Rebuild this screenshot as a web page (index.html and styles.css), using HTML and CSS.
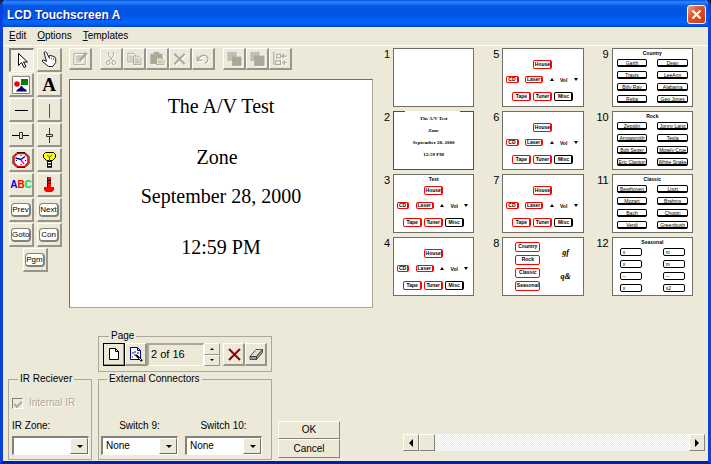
FILE: index.html
```html
<!DOCTYPE html>
<html lang="en">
<head>
<meta charset="utf-8">
<title>LCD Touchscreen A</title>
<link rel="stylesheet" href="styles.css">
</head>
<body>
<div class="window">
  <header class="titlebar">
    <h1>LCD Touchscreen A</h1>
    <button class="close" aria-label="Close"><svg width="11" height="11" viewBox="0 0 11 11"><path d="M1.5 1.5l8 8M9.5 1.5l-8 8" stroke="#fff" stroke-width="2.2"/></svg></button>
  </header>
  <nav class="menubar">
    <button><u>E</u>dit</button><button><u>O</u>ptions</button><button><u>T</u>emplates</button>
  </nav>

  <main class="main">
    <div class="tools">
      <button class="tool pressed" aria-label="Select"><svg width="20" height="20" viewBox="0 0 20 20"><path d="M6.500 2.500v12l3-3 2.500 5 2-1-2.500-4.500h4z" fill="#fff" stroke="#000"/></svg></button>
      <button class="tool" aria-label="Hand"><svg width="20" height="20" viewBox="0 0 20 20"><path d="M5 2.500q1.500-1.500 2.500 0l2.500 5V6q1-1.500 2 0 1-1 2 .5 1.200-.8 1.500.8 1.200 0 1.200 1.200v4l-3 4H9.500l-6-5q-.5-2 1-1.500L7.500 11.500z" fill="#fff" stroke="#000" stroke-width=".9"/><path d="M10.500 7v2M12.500 7.500v2M14.500 8v2" stroke="#444" stroke-width=".7"/></svg></button>
      <button class="tool" aria-label="Picture"><svg width="18" height="18" viewBox="0 0 18 18"><path fill="#fff" stroke="#848278" d="M.5.5h17v17H.5z"/><circle cx="5" cy="8" r="2.800" fill="#f00"/><path fill="#008000" d="M9 3h7v6H9z"/><path fill="#000080" d="M4 15.500q1.500-3 3-3l2.500-3 2.500 3q2 0 3 3z"/></svg></button>
      <button class="tool letter">A</button>
      <button class="tool" aria-label="Horizontal line"><svg width="20" height="20" viewBox="0 0 20 20"><path stroke="#000" d="M4 10.500h13"/></svg></button>
      <button class="tool" aria-label="Vertical line"><svg width="20" height="20" viewBox="0 0 20 20"><path stroke="#555" d="M10.500 4v14"/></svg></button>
      <button class="tool" aria-label="Horizontal slider"><svg width="20" height="20" viewBox="0 0 20 20"><path stroke="#000" d="M1 10.500h17"/><path fill="#ddd" stroke="#333" d="M8.500 7.500h3v6h-3z"/></svg></button>
      <button class="tool" aria-label="Vertical slider"><svg width="20" height="20" viewBox="0 0 20 20"><path stroke="#333" d="M10.500 3v15"/><path fill="#ddd" stroke="#333" d="M7.500 9.500h6v2h-6z"/></svg></button>
      <button class="tool" aria-label="Clock"><svg width="20" height="20" viewBox="0 0 20 20"><path d="M6 2.500h8l4 4v7l-4 4H6l-4-4v-7z" fill="#fff" stroke="#000"/><path d="M6.500 3.500h7l3.500 3.500v6l-3.500 3.500h-7L3 13V7z" fill="none" stroke="#f00000" stroke-width="1.500"/><path d="M10 5v1M10 14v1M5 10.500h1M14 10.500h1" stroke="#000"/><path d="M4.500 8l5.500 1.500 4-3" fill="none" stroke="#000080" stroke-width="1.300"/><path d="M10 10l3 4" stroke="#f0f" stroke-width="1.500"/></svg></button>
      <button class="tool" aria-label="Light"><svg width="20" height="20" viewBox="0 0 20 20"><path d="M6.500 2.500h8l2 2v3l-3 3h-6l-3-3v-3z" fill="#ff0" stroke="#000"/><path d="M8 5l2.500 2L13 5M10.500 7v4" fill="none" stroke="#554"/><path fill="#fff" stroke="#000" d="M8.500 11.500h4v5h-4z"/><path stroke="#000" stroke-width="1.500" d="M8 14h5M8 17h5"/></svg></button>
      <button class="tool abc" aria-label="ABC"><span class="blue">A</span><span class="red">B</span><span class="green">C</span></button>
      <button class="tool" aria-label="Level"><svg width="20" height="20" viewBox="0 0 20 20"><path fill="#f00" d="M8 2h4v10h3v3l-2 2H7l-2-2v-3h3z"/><path stroke="#000" d="M8 5.500h4M8 8.500h4"/><path stroke="#600" d="M8.500 2v10"/></svg></button>
      <button class="tool"><span class="keycap">Prev</span></button>
      <button class="tool"><span class="keycap">Next</span></button>
      <button class="tool"><span class="keycap">Goto</span></button>
      <button class="tool"><span class="keycap">Con</span></button>
      <button class="tool wide"><span class="keycap">Pgm</span></button>
    </div>

    <div class="editor">
      <div class="toolbar">
        <div class="bar-group">
          <button disabled aria-label="Edit item"><svg viewBox="0 0 18 18"><path d="M2.500 3.500h12v12h-12zM5 6.500h6M5 8.500h5M5 10.500h4M5 12.500h5"/><path d="M9 11l7-8" stroke-width="3"/></svg></button>
        </div>
        <div class="bar-group">
          <button disabled aria-label="Cut"><svg viewBox="0 0 18 18"><path d="M6.500 2v4l5 6M11.500 2v4l-5 6"/><circle cx="6" cy="13.500" r="2"/><circle cx="12" cy="13.500" r="2"/></svg></button>
          <button disabled aria-label="Copy"><svg viewBox="0 0 18 18"><path d="M2.500 3.500h6l2 2v7h-8zM4 6.500h3M4 8.500h4M4 10.500h4"/><path fill="#ece9d8" d="M8.500 6.500h5l3 3v6h-8zM10 9.500h3M10 11.500h5M10 13.500h5"/></svg></button>
          <button disabled aria-label="Paste"><svg viewBox="0 0 18 18"><path fill="#aca899" d="M2.500 4.500h12v10h-12z"/><path fill="#aca899" d="M6 2.500h5v3H6z"/><path fill="#ece9d8" d="M8.500 8.500h5l3 3v4h-8zM10 11.500h4M10 13.500h5"/></svg></button>
          <button disabled aria-label="Delete"><svg viewBox="0 0 18 18"><path stroke-width="2.200" d="M3 4l11 11M14 4L3 15"/></svg></button>
          <button disabled aria-label="Undo"><svg viewBox="0 0 18 18"><path stroke-width="1.300" d="M3 6v5h5M3.500 10.500C6 5 12 4 14 8q1 4-3 6"/></svg></button>
        </div>
        <div class="bar-group">
          <button disabled aria-label="Bring to front"><svg viewBox="0 0 18 18"><path fill="#c2beb0" stroke-dasharray="1 1" d="M2.500 2.500h9v9h-9z"/><path fill="#aca899" d="M7.500 7.500h9v9h-9z"/></svg></button>
          <button disabled aria-label="Send to back"><svg viewBox="0 0 18 18"><path fill="#c2beb0" stroke-dasharray="1 1" d="M2.500 2.500h9v9h-9z"/><path fill="#aca899" d="M6.500 6.500h10v10h-10z"/></svg></button>
          <button disabled aria-label="Align"><svg viewBox="0 0 18 18"><path stroke-width="1.200" d="M2.500 2v14M5.500 4.500h4v4h-4zM4.500 11.500h5v4h-5zM16 6.500h-5l2-2M11 6.500l2 2M11 13.500h5M13.500 11v5"/></svg></button>
        </div>
      </div>
      <section class="canvas" aria-label="Page preview">
        <p>The A/V Test</p>
        <p class="zone">Zone</p>
        <p>September 28, 2000</p>
        <p>12:59 PM</p>
      </section>
    </div>

    <ol class="pages">
      <li><span class="num">1</span><div class="page"></div></li>
      <li><span class="num">2</span><div class="page current"><p>The A/V Test</p><p>Zone</p><p>September 28, 2000</p><p>12:59 PM</p></div></li>
      <li><span class="num">3</span><div class="page remote"><p class="heading">Test</p><div class="row"><b>House</b></div><div class="row wide-row"><b>CD</b><b>Laser</b><i class="up"></i><span>Vol</span><i class="down"></i></div><div class="row sources"><b>Tape</b><b>Tuner</b><b class="dark">Misc</b></div></div></li>
      <li><span class="num">4</span><div class="page remote"><p class="heading"></p><div class="row"><b>House</b></div><div class="row wide-row"><b>CD</b><b>Laser</b><i class="up"></i><span>Vol</span><i class="down"></i></div><div class="row sources"><b>Tape</b><b>Tuner</b><b class="dark">Misc</b></div></div></li>
      <li><span class="num">5</span><div class="page remote"><p class="heading"></p><div class="row"><b>House</b></div><div class="row wide-row"><b>CD</b><b>Laser</b><i class="up"></i><span>Vol</span><i class="down"></i></div><div class="row sources"><b>Tape</b><b>Tuner</b><b class="dark">Misc</b></div></div></li>
      <li><span class="num">6</span><div class="page remote"><p class="heading"></p><div class="row"><b>House</b></div><div class="row wide-row"><b>CD</b><b>Laser</b><i class="up"></i><span>Vol</span><i class="down"></i></div><div class="row sources"><b>Tape</b><b>Tuner</b><b class="dark">Misc</b></div></div></li>
      <li><span class="num">7</span><div class="page remote"><p class="heading"></p><div class="row"><b>House</b></div><div class="row wide-row"><b>CD</b><b>Laser</b><i class="up"></i><span>Vol</span><i class="down"></i></div><div class="row sources"><b>Tape</b><b>Tuner</b><b class="dark">Misc</b></div></div></li>
      <li><span class="num">8</span><div class="page genres"><div class="genre-list"><b>Country</b><b>Rock</b><b>Classic</b><b>Seasonal</b></div><div class="marks"><em>gf</em><em>q&amp;</em></div></div></li>
      <li><span class="num">9</span><div class="page list"><p class="heading">Country</p><div class="keys"><b>Garth</b><b>Dean</b><b>Travis</b><b>LeeAnn</b><b>Billy Ray</b><b>Alabama</b><b>Reba</b><b>Geo Jones</b></div></div></li>
      <li><span class="num">10</span><div class="page list"><p class="heading">Rock</p><div class="keys"><b>Zepplin</b><b>Jonny Lang</b><b>Arrowsmith</b><b>Tesla</b><b>Bob Seger</b><b>Motely Crue</b><b>Eric Clapton</b><b>White Snake</b></div></div></li>
      <li><span class="num">11</span><div class="page list"><p class="heading">Classic</p><div class="keys"><b>Beethoven</b><b>Liszt</b><b>Mozart</b><b>Brahms</b><b>Bach</b><b>Chopin</b><b>Verdi</b><b>Greenbush</b></div></div></li>
      <li><span class="num">12</span><div class="page list short"><p class="heading">Seasonal</p><div class="keys"><b>x</b><b>m</b><b>x</b><b>m</b><b>--</b><b>--</b><b>x</b><b>x2</b></div></div></li>
    </ol>
  </main>

  <footer class="dock">
    <fieldset class="page-box">
      <legend>Page</legend>
      <div class="pager">
        <button class="tool default" aria-label="New page"><svg width="16" height="16" viewBox="0 0 16 16"><path fill="#fff" stroke="#000" d="M3.500 2.500h6l3 3v8h-9zM9.500 2.500v3h3"/></svg></button>
        <button class="tool" aria-label="Page wizard"><svg width="16" height="16" viewBox="0 0 16 16"><path fill="#fff" stroke="#000080" d="M2.500 1.500h7l3 3v9h-10zM9.500 1.500v3h3"/><path stroke="#000080" d="M4 7h2M7 5v2M6 9h2M4 11h1M9 7h2"/><path stroke="#000" stroke-width="2" d="M8 9l6 6"/><path stroke="#ff0" d="M11 12l2 2"/></svg></button>
        <output class="count">2 of 16</output>
        <span class="spin"><button aria-label="Next page"><i class="up"></i></button><button aria-label="Previous page"><i class="down"></i></button></span>
        <button class="tool" aria-label="Delete page"><svg width="16" height="16" viewBox="0 0 16 16"><path d="M3 3l11 11M14 3L3 14" stroke="#900000" stroke-width="2"/></svg></button>
        <button class="tool" aria-label="Clear page"><svg width="16" height="16" viewBox="0 0 16 16"><path fill="#ddd" stroke="#333" stroke-width=".8" d="M2 10.500l6-7h6.500l-6 7z"/><path fill="#999" stroke="#333" stroke-width=".8" d="M2 10.500h6.500v3H2z"/><path fill="#aa4" stroke="#333" stroke-width=".8" d="M8.500 10.500l6-7v3l-6 7z"/></svg></button>
      </div>
    </fieldset>

    <fieldset class="ir-box">
      <legend>IR Reciever</legend>
      <label class="check"><input type="checkbox" checked disabled>Internal IR</label>
      <div class="field"><label for="zone">IR Zone:</label><span class="combo"><select id="zone"><option></option></select></span></div>
    </fieldset>

    <fieldset class="ext-box">
      <legend>External Connectors</legend>
      <div class="field centered"><label for="sw9">Switch 9:</label><span class="combo"><select id="sw9"><option>None</option></select></span></div>
      <div class="field centered"><label for="sw10">Switch 10:</label><span class="combo"><select id="sw10"><option>None</option></select></span></div>
    </fieldset>

    <div class="actions"><button>OK</button><button>Cancel</button></div>

    <div class="scroll">
      <button aria-label="Scroll left"><i class="left"></i></button>
      <span class="track"><span class="thumb"></span></span>
      <button aria-label="Scroll right"><i class="right"></i></button>
    </div>
  </footer>
</div>
</body>
</html>
```
FILE: styles.css
```css
* { box-sizing: border-box; }

body {
  margin: 0;
  background: #10204a;
  color: #000;
  font: 10px/12px "Liberation Sans", sans-serif;
}

p, h1, ol, fieldset { margin: 0; padding: 0; }

button, select {
  margin: 0;
  padding: 0;
  border: 0;
  border-radius: 0;
  background: #ece9d8;
  color: inherit;
  font: inherit;
}

svg { display: block; flex: none; }

.window {
  display: flex;
  flex-direction: column;
  min-height: 100vh;
  border: solid #0842d8;
  border-width: 0 3px 3px;
  border-bottom-color: #0020a8;
  border-radius: 6px 6px 0 0;
  background: #ece9d8;
  overflow: hidden;
}

.titlebar {
  display: flex;
  align-items: center;
  justify-content: space-between;
  height: 27px;
  margin: 0 -3px;
  padding: 2px 5px 0 7px;
  background: linear-gradient(#0a50d8, #2a86ff 2px, #0458e4 6px, #0054e3 14px, #0066ff 22px, #0058ee 25px, #0040c0);
}

.titlebar h1 {
  color: #fff;
  font-size: 12px;
  line-height: 16px;
  text-shadow: 1px 1px #0a1883;
}

.close {
  display: grid;
  place-items: center;
  width: 19px;
  height: 19px;
  border: 1px solid #fff;
  border-radius: 3px;
  background: linear-gradient(135deg, #f0a088, #e0532c 40%, #c83a14);
}

.menubar {
  display: flex;
  gap: 11px;
  height: 18px;
  padding: 0 6px;
}

/* Main area */
.main {
  display: grid;
  grid-template-columns: 53px minmax(0, 311fr) minmax(0, 320fr);
  align-items: start;
  padding: 2px 15px 0 6px;
  border-top: 1px solid #fff;
}

.tools {
  display: grid;
  grid-template-columns: 1fr 1fr;
  grid-auto-rows: 24px;
  gap: 1px 3px;
}

.tool {
  display: flex;
  align-items: center;
  justify-content: center;
  overflow: hidden;
  border: solid;
  border-width: 1px 2px 2px 1px;
  border-color: #fff #98958a #98958a #fff;
}

.tool.pressed {
  border-width: 2px 1px 1px 2px;
  border-color: #848278 #fff #fff #848278;
  background: #f2f0e6;
}

.tool.wide {
  grid-column: 1 / 3;
  justify-self: center;
  width: 25px;
}

.letter { font: bold 19px/20px "Liberation Serif", serif; }
.abc { font-weight: bold; }
.blue { color: #00f; }
.red { color: #f00; }
.green { color: #00e030; }

.keycap {
  width: 20px;
  height: 14px;
  border: 1px solid #848278;
  border-right-width: 2px;
  border-bottom-width: 2px;
  border-radius: 4px;
  background: #fff;
  font-size: 8px;
  line-height: 11px;
}

.editor { padding: 0 0 0 7px; min-width: 0; }

.toolbar { display: flex; gap: 8px; }
.bar-group { display: flex; }

.toolbar button {
  width: 23px;
  height: 22px;
  padding: 1px;
  border: solid;
  border-width: 1px 2px 2px 1px;
  border-color: #fff #98958a #98958a #fff;
}

.toolbar svg {
  width: 18px;
  height: 17px;
  fill: none;
  stroke: #aca899;
  filter: drop-shadow(1px 1px 0 #fff);
}

.canvas {
  height: 229px;
  margin-top: 9px;
  padding-top: 14px;
  border: 1px solid #716f64;
  border-right-color: #aca899;
  border-bottom-color: #aca899;
  background: #fff;
  font: 20px/24px "Liberation Serif", serif;
  text-align: center;
}

.canvas p { margin-bottom: 27px; }
.canvas .zone { margin-bottom: 15px; padding-right: 8px; }

/* Page thumbnails */
.pages {
  display: grid;
  grid-template-rows: repeat(4, 59px);
  grid-auto-columns: minmax(0, 1fr);
  grid-auto-flow: column;
  gap: 4px 10px;
  padding-left: 2px;
  list-style: none;
}

.pages li { display: flex; }

.num {
  width: 18px;
  padding-right: 3px;
  font-size: 11px;
  text-align: right;
  white-space: nowrap;
}

.page {
  flex: 1;
  min-width: 0;
  border: 1px solid #716f64;
  background: #fff;
  font-size: 5px;
  line-height: 6px;
  text-align: center;
  white-space: nowrap;
}

.page b {
  display: block;
  border: 1px solid #f00;
  border-right-width: 2px;
  border-radius: 2px;
  font-weight: normal;
}

.page b.dark { border-color: #000; }
.heading { height: 7px; padding-top: 1px; font-weight: bold; }

/* The selected page is framed in red, open in the middle of its top edge */
.page.current {
  display: flex;
  flex-direction: column;
  gap: 5px;
  padding-top: 4px;
  border: solid #f00;
  border-width: 0 1px 1px;
  background-color: #fff;
  background-image: linear-gradient(90deg, #f00 14%, #fff 14%, #fff 84%, #f00 84%);
  background-position: 0 0;
  background-size: 100% 1px;
  background-repeat: no-repeat;
  font: bold 5px/7px "Liberation Serif", serif;
}

.remote .row { display: flex; justify-content: center; }
.remote .row > b { width: 19px; line-height: 7px; }
.remote .row:nth-child(2) { margin-top: 4px; }
.remote .wide-row {
  align-items: center;
  justify-content: space-between;
  margin-top: 7px;
  padding: 0 5px 0 3px;
}
.remote .wide-row > b { width: auto; padding: 0 1px; line-height: 5px; }
.remote .sources { gap: 2px; margin-top: 9px; }
.remote b, .remote span, .genres b { font-weight: bold; }

i.up, i.down { border: solid transparent; border-width: 0 2px; }
i.up { border-bottom: 3px solid #000; }
i.down { border-top: 3px solid #000; }

.genres { display: flex; justify-content: space-between; padding: 4px 12px; }
.genre-list { display: grid; gap: 3px; width: 25px; }
.genre-list b { border-right-width: 1px; line-height: 7px; }
.marks {
  display: flex;
  flex-direction: column;
  gap: 15px;
  padding-top: 6px;
  font: italic bold 8px/9px "Liberation Serif", serif;
}

.keys {
  display: grid;
  grid-template-columns: 1fr 1fr;
  gap: 4px 10px;
  padding: 3px 4px;
}

.page .keys b {
  height: 8px;
  border-color: #000;
  border-width: 1px 1px 2px;
}

.short .keys { gap: 4px 21px; padding: 3px 7px; }
.page.short .keys b { padding-left: 2px; text-align: left; border-width: 1px; }

/* Bottom controls */
.dock {
  display: grid;
  grid-template-columns: 84px 174px 62px minmax(0, 1fr);
  grid-template-rows: 42px 87px;
  gap: 1px 6px;
  margin-top: auto;
  padding: 0 3px 1px 5px;
}

fieldset {
  min-width: 0;
  border: 1px solid #aca899;
}

legend { margin-left: 6px; padding: 0 2px; }

.page-box { grid-column: 2; padding: 1px 4px; }
.ir-box { grid-column: 1; padding: 0 3px; }
.ext-box { display: flex; gap: 7px; padding: 0 2px; }

.pager { display: flex; height: 23px; }
.pager .tool { width: 22px; }
.pager .default { outline: 1px solid #000; outline-offset: -1px; }

.count {
  flex: 1;
  padding: 3px 2px;
  border: solid;
  border-width: 2px 1px 1px 2px;
  border-color: #aca899 #fff #fff #aca899;
  font-size: 11px;
}

.spin { display: grid; width: 16px; margin-right: 3px; }
.spin button {
  display: grid;
  place-items: center;
  border: 1px solid;
  border-color: #fff #98958a #98958a #fff;
}
.spin i.up { border-bottom-width: 2px; }
.spin i.down { border-top-width: 2px; }

.check {
  display: flex;
  align-items: center;
  gap: 6px;
  height: 12px;
  margin: 12px 0 11px;
  color: #aca899;
  text-shadow: 1px 1px #fff;
}

.check input {
  appearance: none;
  display: grid;
  place-items: center;
  width: 11px;
  height: 11px;
  margin: 0;
  border: 1px solid;
  border-color: #848278 #fff #fff #848278;
}

.check input::before {
  content: "";
  width: 6px;
  height: 3px;
  border: solid #aca899;
  border-width: 0 0 2px 2px;
  transform: rotate(-45deg);
}

.field { flex: none; width: 77px; }
.field label { display: block; margin-bottom: 4px; }
.ext-box .field { padding-top: 35px; }
.centered label { text-align: center; }

.combo { position: relative; display: block; }

.combo select {
  appearance: none;
  display: block;
  width: 100%;
  height: 19px;
  padding-left: 3px;
  border: solid;
  border-width: 2px 1px 1px 2px;
  border-color: #848278 #fff #fff #848278;
  background: #fff;
}

.combo::before {
  content: "";
  position: absolute;
  top: 2px;
  right: 1px;
  bottom: 1px;
  width: 16px;
  border: 1px solid;
  border-color: #fff #716f64 #716f64 #fff;
  background: #ece9d8;
  pointer-events: none;
}

.combo::after {
  content: "";
  position: absolute;
  top: 9px;
  right: 6px;
  border: solid transparent;
  border-width: 3px 3px 0;
  border-top-color: #000;
  pointer-events: none;
}

.actions {
  display: grid;
  grid-template-rows: 18px 19px;
  align-content: end;
  padding-bottom: 2px;
}

.actions button, .scroll button, .thumb {
  border: 1px solid;
  border-color: #fff #848278 #848278 #fff;
}

.scroll {
  display: flex;
  align-self: end;
  height: 17px;
  margin: 0 0 9px 57px;
}

.scroll button { display: grid; place-items: center; width: 16px; }

.track {
  flex: 1;
  background: repeating-conic-gradient(#fff 0 25%, #ece9d8 0 50%) 0 0 / 2px 2px;
}

.thumb { display: block; width: 16px; height: 100%; background: #ece9d8; }

.left, .right { border: solid transparent; border-width: 4px 0; }
.left { border-right: 4px solid #000; }
.right { border-left: 4px solid #000; }
```
